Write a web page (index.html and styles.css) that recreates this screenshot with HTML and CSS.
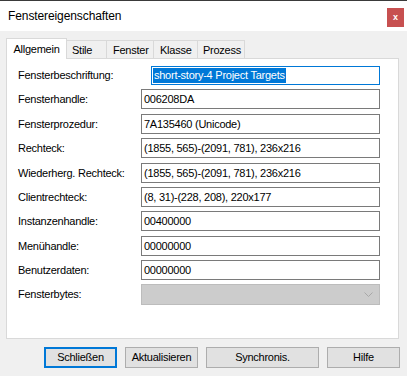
FILE: index.html
```html
<!DOCTYPE html>
<html lang="de">

<head>
	<meta charset="utf-8">
	<title>Fenstereigenschaften</title>
	<link rel="stylesheet" href="styles.css">
</head>

<body>
	<div class="window">
		<div class="titlebar">
			<span class="title">Fenstereigenschaften</span>
			<span class="close">x</span>
		</div>
		<div class="tabs">
			<div class="tab active">Allgemein</div>
			<div class="tab tab-stile">Stile</div>
			<div class="tab tab-fenster">Fenster</div>
			<div class="tab tab-klasse">Klasse</div>
			<div class="tab tab-prozess">Prozess</div>
		</div>
		<div class="panel">
			<div class="row">
				<span class="label">Fensterbeschriftung:</span>
				<div class="field caption"><span class="selected">short-story-4 Project Targets</span></div>
			</div>
			<div class="row">
				<span class="label">Fensterhandle:</span>
				<div class="field">006208DA</div>
			</div>
			<div class="row">
				<span class="label">Fensterprozedur:</span>
				<div class="field">7A135460 (Unicode)</div>
			</div>
			<div class="row">
				<span class="label">Rechteck:</span>
				<div class="field">(1855, 565)-(2091, 781), 236x216</div>
			</div>
			<div class="row">
				<span class="label">Wiederherg. Rechteck:</span>
				<div class="field">(1855, 565)-(2091, 781), 236x216</div>
			</div>
			<div class="row">
				<span class="label">Clientrechteck:</span>
				<div class="field">(8, 31)-(228, 208), 220x177</div>
			</div>
			<div class="row">
				<span class="label">Instanzenhandle:</span>
				<div class="field">00400000</div>
			</div>
			<div class="row">
				<span class="label">Menühandle:</span>
				<div class="field">00000000</div>
			</div>
			<div class="row">
				<span class="label">Benutzerdaten:</span>
				<div class="field">00000000</div>
			</div>
			<div class="row">
				<span class="label">Fensterbytes:</span>
				<div class="combo">
					<svg class="chevron" viewBox="0 0 9 5" width="9" height="5">
						<polyline points="0.5,0.5 4.5,4.5 8.5,0.5" fill="none" stroke="#a8a8a8" stroke-width="1"></polyline>
					</svg>
				</div>
			</div>
		</div>
		<div class="buttons">
			<div class="button default">Schließen</div>
			<div class="button">Aktualisieren</div>
			<div class="button wide">Synchronis.</div>
			<div class="button">Hilfe</div>
		</div>
	</div>
</body>

</html>
```

FILE: styles.css
```css
* {
	box-sizing: border-box;
}

body {
	background-color: #F0F0F0;
	color: #000000;
	font-family: "Liberation Sans", Arial, sans-serif;
	font-size: 11px;
	margin: 0;
}

.window {
	border-top: 1px solid #3A3A3A;
	height: 376px;
	width: 407px;
}

.titlebar {
	align-items: flex-start;
	background-color: #FFFFFF;
	display: flex;
	height: 30px;
	justify-content: space-between;
}

.title {
	font-size: 12px;
	letter-spacing: -0.1px;
	line-height: 30px;
	padding-left: 8px;
}

.close {
	background-color: #C75050;
	color: #FFFFFF;
	font-size: 9px;
	font-weight: bold;
	height: 19px;
	line-height: 18px;
	margin: 7px 3px 0 0;
	text-align: center;
	width: 17px;
}

.tabs {
	align-items: flex-end;
	display: flex;
	letter-spacing: -0.25px;
	padding: 7px 0 0 6px;
}

.tab {
	background-color: #F0F0F0;
	border: 1px solid #D9D9D9;
	border-bottom: none;
	border-left: none;
	height: 18px;
	line-height: 18px;
	padding-left: 5px;
}

.tab.active {
	background-color: #FFFFFF;
	border-left: 1px solid #D9D9D9;
	height: 21px;
	line-height: 20px;
	margin-bottom: -1px;
	padding-left: 0;
	position: relative;
	text-align: center;
	width: 61px;
	z-index: 1;
}

.tab-stile {
	width: 40px;
}

.tab-fenster {
	padding-left: 6px;
	width: 47px;
}

.tab-klasse {
	padding-left: 6px;
	width: 44px;
}

.tab-prozess {
	width: 47px;
}

.panel {
	background-color: #FFFFFF;
	border: 1px solid #D9D9D9;
	display: flex;
	flex-direction: column;
	gap: 4.375px;
	height: 281px;
	letter-spacing: -0.25px;
	margin: 0 8px 0 6px;
	padding: 6px 0 0 11px;
}

.row {
	align-items: center;
	display: flex;
	height: 20px;
}

.label {
	width: 123px;
}

.field {
	border: 1px solid #7A7A7A;
	height: 20px;
	line-height: 18px;
	padding-left: 2px;
	white-space: nowrap;
	width: 239px;
}

.field.caption {
	border-color: #0078D7;
	height: 19px;
	line-height: 15px;
	margin-left: 10px;
	padding: 1px 0 0 1px;
	width: 229px;
}

.selected {
	background-color: #0078D7;
	color: #FFFFFF;
	display: inline-block;
	height: 15px;
	padding: 0 1px;
}

.combo {
	align-items: center;
	background-color: #CCCCCC;
	border: 1px solid #BCBCBC;
	display: flex;
	height: 21px;
	justify-content: flex-end;
	padding-right: 6px;
	width: 239px;
}

.buttons {
	display: flex;
	gap: 8px;
	justify-content: flex-end;
	letter-spacing: -0.25px;
	margin-top: 8px;
	padding-right: 7px;
}

.button {
	background-color: #E1E1E1;
	border: 1px solid #ADADAD;
	height: 21px;
	line-height: 19px;
	text-align: center;
	width: 73px;
}

.button.default {
	border: 2px solid #0078D7;
	line-height: 17px;
}

.button.wide {
	width: 113px;
}
```
